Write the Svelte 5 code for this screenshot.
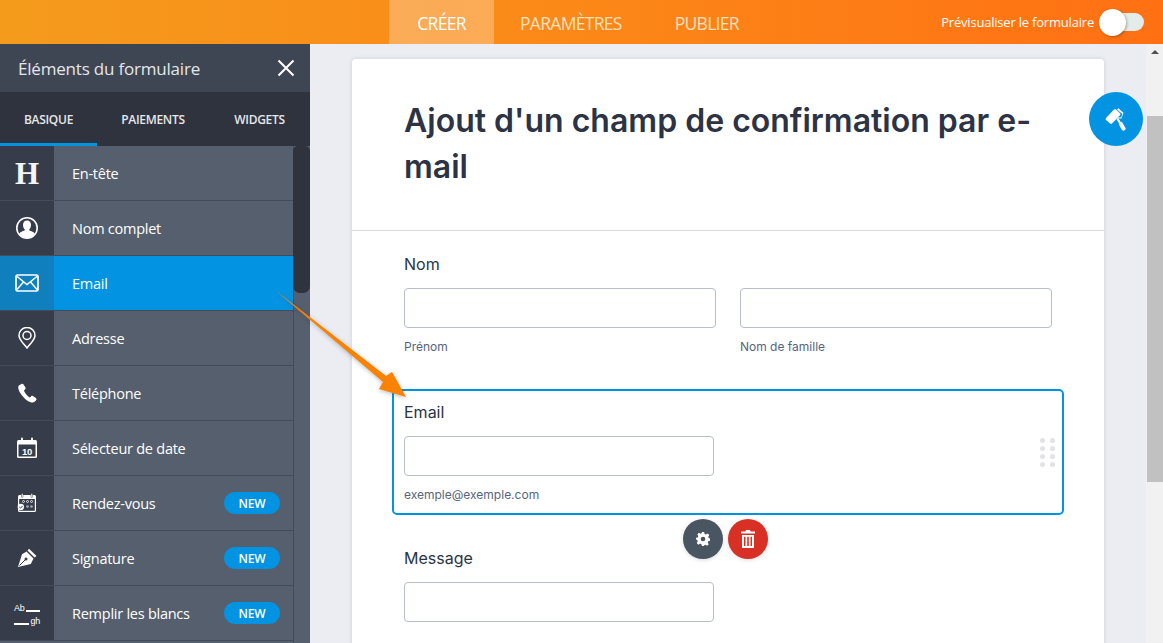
<script>
  const items = [
    { name: 'En-tête', icon: 'h' },
    { name: 'Nom complet', icon: 'user' },
    { name: 'Email', icon: 'mail', active: true },
    { name: 'Adresse', icon: 'pin' },
    { name: 'Téléphone', icon: 'phone' },
    { name: 'Sélecteur de date', icon: 'date' },
    { name: 'Rendez-vous', icon: 'appt', isNew: true },
    { name: 'Signature', icon: 'pen', isNew: true },
    { name: 'Remplir les blancs', icon: 'fill', isNew: true }
  ];
</script>

<div class="page">
  <header class="top">
    <nav class="tabs">
      <span class="tab current">CRÉER</span>
      <span class="tab">PARAMÈTRES</span>
      <span class="tab">PUBLIER</span>
    </nav>
    <div class="preview">
      <span>Prévisualiser le formulaire</span>
      <span class="toggle"><span class="knob"></span></span>
    </div>
  </header>

  <div class="body">
    <aside class="side">
      <div class="side-title">
        <span>Éléments du formulaire</span>
        <svg width="18" height="18" viewBox="0 0 18 18"><path d="M1.5 1.5 16.5 16.5M16.5 1.5 1.5 16.5" stroke="#fff" stroke-width="2" fill="none"/></svg>
      </div>
      <div class="side-tabs">
        <span class="st on">BASIQUE</span>
        <span class="st">PAIEMENTS</span>
        <span class="st">WIDGETS</span>
      </div>
      <div class="list-wrap">
        <ul class="list">
          {#each items as it}
            <li class="row" class:active={it.active}>
              <span class="ico">
                {#if it.icon === 'h'}
                  <span class="h">H</span>
                {:else if it.icon === 'user'}
                  <svg width="24" height="24" viewBox="0 0 24 24"><circle cx="12" cy="12" r="10.2" fill="#363c49" stroke="#fff" stroke-width="1.6"/><path d="M12 4.6c-2.6 0-4 2-4 4.3 0 1.800.7 3.300 1.700 4.300v1.300c-2 .8-4.700 1.500-5.500 3.200A10 10 0 0 0 12 22a10 10 0 0 0 7.800-4.300c-.8-1.700-3.500-2.400-5.500-3.200v-1.300c1-1 1.700-2.500 1.700-4.300 0-2.300-1.400-4.300-4-4.300z" fill="#fff"/></svg>
                {:else if it.icon === 'mail'}
                  <svg width="24" height="18" viewBox="0 0 24 18"><rect x="1" y="1" width="22" height="16" rx="1.500" fill="none" stroke="#fff" stroke-width="1.700"/><path d="M1.500 2 12 10.500 22.500 2M1.500 16 8.500 8M22.500 16 15.500 8" fill="none" stroke="#fff" stroke-width="1.500"/></svg>
                {:else if it.icon === 'pin'}
                  <svg width="20" height="22" viewBox="0 0 20 22"><path d="M10 21C6 16 2 12.500 2 8.500a8 8 0 0 1 16 0C18 12.500 14 16 10 21z" fill="none" stroke="#fff" stroke-width="1.500"/><circle cx="10" cy="8.500" r="4" fill="none" stroke="#fff" stroke-width="1.500"/></svg>
                {:else if it.icon === 'phone'}
                  <svg width="20" height="20" viewBox="0 0 20 20"><path d="M4.500 1 1.800 2.500C.6 4 1.500 8 5 12.500s7.500 7 10.500 7c1.500 0 3.500-1.500 4-3 .2-.6-.1-1-.6-1.400l-3-2c-.6-.4-1.200-.3-1.700.2l-1.200 1.200c-1.500-.3-5.500-4.500-6-7l1.200-1.300c.5-.5.600-1.100.3-1.700L6.500 1.500C6 .7 5.300.6 4.500 1z" fill="#fff"/></svg>
                {:else if it.icon === 'date'}
                  <svg width="22" height="22" viewBox="0 0 22 22"><rect x="1" y="3" width="20" height="18" rx="1.500" fill="#fff"/><rect x="2.500" y="7.500" width="17" height="12" fill="#363c49"/><rect x="5" y="0.500" width="2" height="4.500" rx="1" fill="#fff"/><rect x="15" y="0.500" width="2" height="4.500" rx="1" fill="#fff"/><text x="11" y="17.500" text-anchor="middle" class="ten">10</text></svg>
                {:else if it.icon === 'appt'}
                  <svg width="20" height="20" viewBox="0 0 20 20"><rect x="1" y="2" width="18" height="17" rx="1.500" fill="#fff"/><rect x="2.200" y="6" width="15.600" height="11.800" fill="#363c49"/><rect x="4.500" y="0.500" width="1.500" height="4" rx=".7" fill="#fff" stroke="#363c49" stroke-width=".5"/><rect x="14" y="0.500" width="1.500" height="4" rx=".7" fill="#fff" stroke="#363c49" stroke-width=".5"/><g fill="none" stroke="#fff" stroke-width=".8"><circle cx="6.500" cy="8.500" r="1"/><circle cx="10.500" cy="8.500" r="1"/><circle cx="14.500" cy="8.500" r="1"/></g><g fill="#aab"><circle cx="10.500" cy="13.500" r="1.300"/><circle cx="14.500" cy="13.500" r="1.300"/></g><circle cx="3.800" cy="14" r="3.200" fill="#fff"/><path d="M2.300 14l1.200 1.200 2-2.200" fill="none" stroke="#363c49" stroke-width="1"/></svg>
                {:else if it.icon === 'pen'}
                  <svg width="20" height="20" viewBox="0 0 20 20"><path d="M12 .8 19.500 8l-2 1.500L10.500 2.500z" fill="#fff"/><path d="M9.500 3.500 16.500 10.500 13.800 16 1 19l4-12.800zM3 17.200l4.700-4.700" fill="#fff"/><path d="M2.500 17.500 8 12" stroke="#363c49" stroke-width="1"/><circle cx="9" cy="11" r="1.500" fill="#363c49"/></svg>
                {:else}
                  <span class="fill">
                    <span class="fl"><b>Ab</b><i></i></span>
                    <span class="fl"><i></i><b>gh</b></span>
                  </span>
                {/if}
              </span>
              <span class="label">{it.name}</span>
              {#if it.isNew}<span class="new">NEW</span>{/if}
            </li>
          {/each}
        </ul>
        <div class="thumb"></div>
      </div>
    </aside>

    <main class="canvas">
      <section class="card">
        <h1>Ajout d'un champ de confirmation par e-mail</h1>
        <div class="fields">
          <div class="field plain">
            <div class="lab">Nom</div>
            <div class="two">
              <div class="col"><div class="inp wide"></div><div class="sub">Prénom</div></div>
              <div class="col"><div class="inp wide"></div><div class="sub">Nom de famille</div></div>
            </div>
          </div>
          <div class="field selected">
            <div class="lab">Email</div>
            <div class="inp"></div>
            <div class="sub">exemple@exemple.com</div>
            <div class="grip">{#each Array(8) as _}<i></i>{/each}</div>
            <div class="actions">
              <span class="act gear">
                <svg width="14" height="14" viewBox="0 0 24 24"><path fill="#fff" fill-rule="evenodd" d="M10 0h4l.7 3.300 2.300 1 2.900-1.800 2.800 2.800L21 8.200l.9 2.200 2.100.6v4l-3 .7-1 2.300 1.800 2.900-2.800 2.800-2.900-1.800-2.300 1L14 24h-4l-.7-3.100-2.300-1-2.900 1.800-2.800-2.800L3 16l-1-2.300L0 13v-3l3-.7 1-2.300-1.800-2.900L5 1.300 7.900 3l2-.9zM12 8a4 4 0 1 0 0 8 4 4 0 0 0 0-8z"/></svg>
              </span>
              <span class="act trash">
                <svg width="14" height="18" viewBox="0 0 14 18"><path fill="#fff" d="M5 0h4l.6 1.500H14v2H0v-2h4.400zM1 5h12v13H1zm2 1.800V16h1.500V6.800zm3.200 0V16h1.600V6.800zm3.300 0V16H11V6.800z" fill-rule="evenodd"/></svg>
              </span>
            </div>
          </div>
          <div class="field plain msg">
            <div class="lab">Message</div>
            <div class="inp"></div>
          </div>
        </div>
      </section>
      <button class="paint" aria-label="Style">
        <svg width="26" height="26" viewBox="0 0 26 26"><g fill="#fff"><path d="M3 12 11 3.500a1.500 1.500 0 0 1 2 0l4 3.800a1.500 1.500 0 0 1 0 2L9 17.500a1.500 1.500 0 0 1-2 0l-4-3.500a1.500 1.500 0 0 1 0-2z"/><path d="M14 3.500l1.500-1.200 5 4.500-2 5.800-3 0 4 6.200-1.700 1.200-4.300-6.500 1.400-2 3.400-.2.900-3.200z" opacity=".95"/><rect x="17" y="16" width="4" height="9" rx="1.500" transform="rotate(-30 19 20)"/></g></svg>
      </button>
    </main>

    <div class="sb">
      <span class="up"></span>
      <span class="sb-thumb"></span>
    </div>
  </div>

  <svg class="arrow" width="1163" height="643" viewBox="0 0 1163 643" aria-hidden="true">
    <defs><filter id="s" x="-20%" y="-20%" width="140%" height="140%"><feDropShadow dx="0" dy="1" stdDeviation="2" flood-color="#334" flood-opacity=".35"/></filter></defs>
    <polygon points="275,290 386,376 392,372 406,397 379,389 383,382" fill="#f98200" filter="url(#s)"/>
  </svg>
</div>

<style>
  :global(body) { margin: 0; }
  .page { position: relative; width: 1163px; height: 643px; overflow: hidden; font-family: Inter, sans-serif; display: flex; flex-direction: column; background: #ebedf2; }

  .top { height: 44px; flex: none; display: flex; align-items: stretch; background: linear-gradient(90deg, #f49b1c 0%, #fb8a18 45%, #ff7013 100%); color: #fff; position: relative; padding-left: 389px; box-sizing: border-box; }
  .tabs { display: flex; }
  .tab { font-family: "Open Sans", sans-serif; font-size: 17.500px; line-height: 46px; color: #ffe0bd; padding: 0 27px 0 0; margin-left: 26px; letter-spacing: -0.700px; }
  .tab.current { color: #fff; background: rgba(255,255,255,.27); margin-left: 0; width: 105px; padding: 0; text-align: center; box-sizing: border-box; }
  .preview { margin-left: auto; display: flex; align-items: center; font-family: "Open Sans", sans-serif; font-size: 13px; letter-spacing: -0.200px; padding-right: 19px; gap: 5px; }
  .toggle { width: 45px; height: 18px; border-radius: 9px; background: #e4ecea; position: relative; display: block; }
  .knob { position: absolute; left: 0; top: -4px; width: 27px; height: 27px; border-radius: 50%; background: #fff; box-shadow: 1px 1px 3px rgba(0,0,0,.3); }

  .body { flex: 1; display: flex; min-height: 0; }
  .side { width: 310px; flex: none; display: flex; flex-direction: column; background: #555f6e; color: #fff; font-family: "Open Sans", sans-serif; }
  .side-title { height: 48px; flex: none; background: #3f4653; display: flex; align-items: center; justify-content: space-between; padding: 0 15px 0 18px; font-size: 17px; letter-spacing: -0.200px; color: #e4e6ea; }
  .side-tabs { height: 54px; flex: none; background: #2f333d; display: flex; font-size: 12px; font-weight: 600; color: #e6e7ea; letter-spacing: -0.300px; }
  .st { display: flex; align-items: center; justify-content: center; box-sizing: border-box; width: 112px; padding-top: 1px; }
  .st.on { width: 97px; border-bottom: 3px solid #0293e2; padding-top: 4px; }
  .st:last-child { width: 101px; }
  .list-wrap { flex: 1; min-height: 0; display: flex; position: relative; }
  .list { list-style: none; margin: 0; padding: 0; width: 293px; border-right: 1px solid #434b58; box-sizing: content-box; flex: none; }
  .row { height: 55px; box-sizing: border-box; display: flex; align-items: center; border-bottom: 1px solid #434b58; font-size: 14.500px; letter-spacing: -0.250px; background: #555f6e; }
  .row.active { background: #0293e2; }
  .ico { width: 54px; height: 100%; flex: none; background: #363c49; display: flex; align-items: center; justify-content: center; }
  .row.active .ico { background: #0f7fbe; }
  .h { font-family: "Liberation Serif", serif; font-weight: 700; font-size: 31px; color: #f4f5f6; line-height: 1; }
  .ten { font-family: "Liberation Sans", sans-serif; font-size: 9.500px; font-weight: 700; fill: #fff; }
  .fill { display: flex; flex-direction: column; gap: 1px; font-family: "Liberation Sans", sans-serif; font-size: 9px; width: 26px; color: #fff; }
  .fl { display: flex; align-items: flex-end; gap: 1px; height: 12px; }
  .fl b { font-weight: 400; line-height: 10px; }
  .fl i { display: block; flex: 1; height: 1.500px; background: #fff; margin-bottom: 1px; }
  .label { margin-left: 18px; flex: 1; }
  .new { width: 56px; height: 22px; border-radius: 11px; background: #0293e2; font-size: 12px; font-weight: 600; display: flex; align-items: center; justify-content: center; margin-right: 13px; letter-spacing: -0.200px; }
  .thumb { position: absolute; left: 293px; top: 0; width: 17px; height: 147px; background: #2f333d; border-radius: 5px 5px 7px 7px; }

  .canvas { flex: 1; min-width: 0; position: relative; overflow: hidden; padding: 15px 0 0 42px; box-sizing: border-box; }
  .card { width: 752px; height: 640px; background: #fff; border-radius: 4px; box-shadow: 0 0 4px rgba(40,50,80,.15); box-sizing: border-box; }
  h1 { margin: 0; padding: 39px 52px 0; height: 172px; box-sizing: border-box; border-bottom: 1px solid #d8dae0; font-size: 32px; font-weight: 600; line-height: 46px; color: #2c3345; letter-spacing: 0; }
  .fields { padding: 0 40px; }
  .field { position: relative; box-sizing: border-box; }
  .plain { padding: 0 12px; }
  .field:first-child { padding-top: 23px; height: 158px; }
  .lab { font-size: 16px; line-height: 20px; color: #2c3345; margin-bottom: 14px; }
  .field:first-child .lab { margin-bottom: 14px; }
  .two { display: flex; gap: 24px; }
  .col { width: 312px; }
  .inp { width: 310px; height: 40px; border: 1px solid #b8bdc9; border-radius: 4px; box-sizing: border-box; background: #fff; }
  .inp.wide { width: 312px; }
  .sub { font-size: 12px; line-height: 14px; color: #57647e; margin-top: 12px; }
  .selected { border: 2px solid #0293e2; border-radius: 5px; height: 126px; padding: 11px 10px 0; }
  .selected .lab { margin-bottom: 14px; }
  .grip { position: absolute; left: 646px; top: 47px; display: grid; grid-template-columns: 5px 5px; gap: 3px 3px; column-gap: 5px; }
  .grip i { display: block; width: 5px; height: 5px; border-radius: 50%; background: #e3e3e5; }
  .actions { position: absolute; left: 289px; top: 128px; display: flex; gap: 5px; }
  .act { width: 40px; height: 40px; border-radius: 50%; display: flex; align-items: center; justify-content: center; box-shadow: 0 1px 4px rgba(0,0,0,.15); }
  .gear { background: #4a5562; }
  .trash { background: #d93025; }
  .msg { padding-top: 33px; }
  .paint { position: absolute; left: 779px; top: 48px; width: 54px; height: 54px; border-radius: 50%; border: 0; padding: 0; background: #0293e2; display: flex; align-items: center; justify-content: center; }
  .sb { width: 17px; flex: none; background: #f1f1f1; position: relative; margin-left: 0; }
  .up { position: absolute; left: 5px; top: 6px; width: 0; height: 0; border-left: 4px solid transparent; border-right: 4px solid transparent; border-bottom: 4px solid #505050; }
  .sb-thumb { position: absolute; left: 1px; right: 0; top: 72px; height: 366px; background: #c1c1c1; }
  .arrow { position: absolute; left: 0; top: 0; pointer-events: none; }
</style>
